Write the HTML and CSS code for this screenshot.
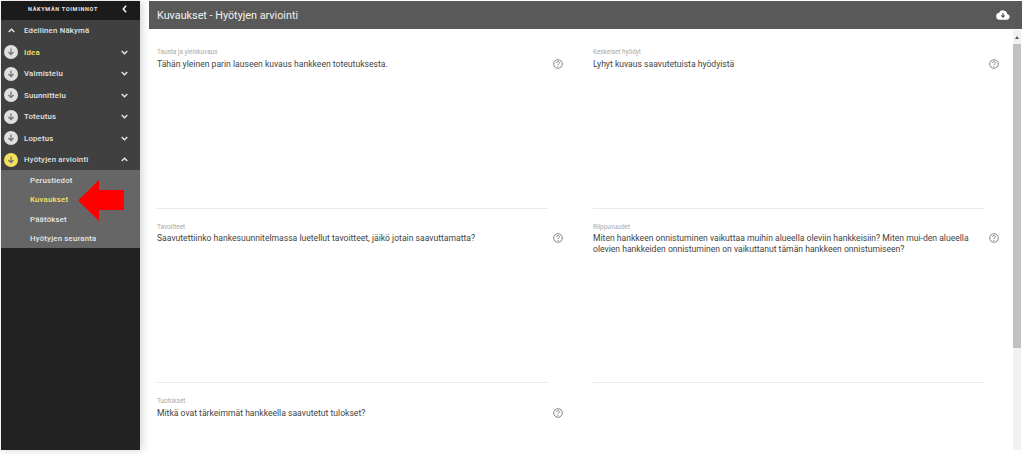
FILE: index.html
```html
<!DOCTYPE html>
<html lang="fi">
<head>
<meta charset="utf-8">
<title>Kuvaukset - Hyötyjen arviointi</title>
<link rel="stylesheet" href="styles.css">
</head>
<body>
<svg class="defs" width="0" height="0" aria-hidden="true">
  <symbol id="down" viewBox="0 0 14 14"><circle cx="7" cy="7" r="7" fill="currentColor"/><path d="M7 3.500v5.500M4.400 7 7 9.500 9.600 7" fill="none" stroke="#777" stroke-width="1.300"/></symbol>
  <symbol id="chev" viewBox="0 0 10 7"><path d="M1 1.200l4 4 4-4" fill="none" stroke="currentColor" stroke-width="2"/></symbol>
  <symbol id="help" viewBox="0 0 10 10"><circle cx="5" cy="5" r="4.300" fill="none" stroke="currentColor" stroke-width=".8"/><path d="M3.600 4c0-1.900 2.800-1.900 2.800-.2C6.400 4.900 5 4.800 5 6.200M5 6.900v1" fill="none" stroke="currentColor" stroke-width=".8"/></symbol>
</svg>
<div class="app">
  <aside class="sidebar">
    <div class="side-head">
      <span class="side-title">NÄKYMÄN TOIMINNOT</span>
      <svg class="back" viewBox="0 0 6 10"><path d="M5 1 1.500 5 5 9" fill="none" stroke="currentColor" stroke-width="2"/></svg>
    </div>
    <nav class="menu">
      <div class="row prev"><svg class="chev up lead" aria-hidden="true"><use href="#chev"/></svg><span class="row-text">Edellinen Näkymä</span></div>
      <div class="row"><svg class="dot"><use href="#down"/></svg><span class="row-text hi">Idea</span><svg class="chev"><use href="#chev"/></svg></div>
      <div class="row"><svg class="dot"><use href="#down"/></svg><span class="row-text">Valmistelu</span><svg class="chev"><use href="#chev"/></svg></div>
      <div class="row"><svg class="dot"><use href="#down"/></svg><span class="row-text">Suunnittelu</span><svg class="chev"><use href="#chev"/></svg></div>
      <div class="row"><svg class="dot"><use href="#down"/></svg><span class="row-text">Toteutus</span><svg class="chev"><use href="#chev"/></svg></div>
      <div class="row"><svg class="dot"><use href="#down"/></svg><span class="row-text">Lopetus</span><svg class="chev"><use href="#chev"/></svg></div>
      <div class="row"><svg class="dot hi"><use href="#down"/></svg><span class="row-text">Hyötyjen arviointi</span><svg class="chev up"><use href="#chev"/></svg></div>
    </nav>
    <div class="submenu">
      <div class="sub">Perustiedot</div>
      <div class="sub hi">Kuvaukset</div>
      <div class="sub">Päätökset</div>
      <div class="sub">Hyötyjen seuranta</div>
      <svg class="arrow" viewBox="0 0 46 41"><path d="M0 20.500 21 0v10h25v20H21v11z" fill="#fe0000"/></svg>
    </div>
  </aside>
  <main class="main">
    <header class="topbar">
      <h1 class="page-title">Kuvaukset - Hyötyjen arviointi</h1>
      <svg class="cloud" viewBox="0 0 24 16"><path d="M19.300 6.100A7.500 7.500 0 0 0 5.300 4.100 6 6 0 0 0 6 16h13a5 5 0 0 0 .3-9.900z" fill="#fff"/><path d="M12 4.500v6M9 8.500l3 3.200 3-3.200" fill="none" stroke="#555" stroke-width="2"/></svg>
    </header>
    <div class="body">
      <div class="fields">
        <section class="field">
          <div class="label">Tausta ja yleiskuvaus</div><p class="value">Tähän yleinen parin lauseen kuvaus hankkeen toteutuksesta.</p>
          <svg class="help"><use href="#help"/></svg>
        </section>
        <section class="field">
          <div class="label">Keskeiset hyödyt</div><p class="value">Lyhyt kuvaus saavutetuista hyödyistä</p>
          <svg class="help"><use href="#help"/></svg>
        </section>
        <section class="field">
          <div class="label">Tavoitteet</div><p class="value">Saavutettiinko hankesuunnitelmassa luetellut tavoitteet, jäikö jotain saavuttamatta?</p>
          <svg class="help"><use href="#help"/></svg>
        </section>
        <section class="field">
          <div class="label">Riippuvuudet</div><p class="value">Miten hankkeen onnistuminen vaikuttaa muihin alueella oleviin hankkeisiin? Miten mui-den alueella olevien hankkeiden onnistuminen on vaikuttanut tämän hankkeen onnistumiseen?</p>
          <svg class="help"><use href="#help"/></svg>
        </section>
        <section class="field">
          <div class="label">Tuotokset</div><p class="value">Mitkä ovat tärkeimmät hankkeella saavutetut tulokset?</p>
          <svg class="help"><use href="#help"/></svg>
        </section>
      </div>
      <div class="scrollbar">
        <div class="sb-btn"><span class="sb-arrow"></span></div>
        <div class="sb-thumb"></div>
      </div>
    </div>
  </main>
</div>
</body>
</html>
```
FILE: styles.css
```css
* { box-sizing: border-box; }
html, body { margin: 0; padding: 0; background: #fff; }
body { width: 1023px; height: 454px; overflow: hidden; font-family: Roboto, "Liberation Sans", sans-serif; }
.defs { display: block; height: 0; }
.app { display: flex; height: 450px; padding: 1px 1px 0; }
.sidebar { width: 139px; flex: none; background: #222; color: #e6e6e6; box-shadow: 2px 0 8px rgba(0,0,0,.18); display: flex; flex-direction: column; }
.side-head { height: 19px; background: #1b1b1b; display: flex; align-items: center; padding: 0 13px 4px 27px; flex: none; }
.side-title { flex: 1; font-size: 5.500px; font-weight: 700; letter-spacing: .7px; color: #e8e8e8; }
.back { width: 5px; height: 8px; color: #eee; }
.menu { background: #404040; height: 150px; flex: none; }
.row { height: 21.500px; display: flex; align-items: center; padding: 0 12px 0 3px; }
.row-text { flex: 1; margin-left: 6px; font-size: 7.800px; font-weight: 500; letter-spacing: .2px; color: #e3e3e3; }
.row-text.hi { color: #f5e46c; }
.dot { width: 14px; height: 14px; color: #e0e0e0; flex: none; }
.dot.hi { color: #f3e15e; }
.chev { width: 7px; height: 5px; color: #e8e8e8; flex: none; }
.chev.up { transform: rotate(180deg); }
.chev.lead { margin-left: 4px; }
.prev .row-text { margin-left: 9px; }
.submenu { position: relative; background: #666; height: 78px; padding-top: .5px; flex: none; }
.sub { height: 19.500px; display: flex; align-items: center; padding-left: 29px; font-size: 7.800px; font-weight: 500; letter-spacing: .2px; color: #e6e6e6; }
.sub.hi { color: #f5e46c; }
.arrow { position: absolute; left: 77px; top: 10px; width: 46px; height: 41px; }
.main { flex: 1; min-width: 0; margin-left: 9px; display: flex; flex-direction: column; }
.topbar { height: 28px; background: #595959; flex: none; display: flex; align-items: center; justify-content: space-between; padding: 0 12px 0 8px; }
.page-title { margin: 0; font-size: 10.800px; font-weight: 400; color: #f2f2f2; }
.cloud { width: 14px; height: 10px; }
.body { flex: 1; display: flex; min-height: 0; }
.fields { flex: 1; min-width: 0; overflow: hidden; display: grid; grid-template-columns: 391px 391px; column-gap: 45px; grid-auto-rows: 174.500px; padding: 19px 0 0 8px; align-content: start; }
.field { position: relative; border-bottom: 1px solid #e9e9e9; height: 160.500px; }
.field:last-child { border-bottom: 0; }
.label { font-size: 6.400px; color: #a8a8a8; line-height: 8px; }
.value { margin: 2.500px 0 0; font-size: 8.600px; line-height: 10.500px; color: #444; }
.help { position: absolute; left: 396px; top: 10.500px; width: 10px; height: 10px; color: #666; }
.scrollbar { width: 8px; margin: 1px 1px 0 0; flex: none; background: #f1f1f1; display: flex; flex-direction: column; }
.sb-btn { height: 14px; display: flex; align-items: center; justify-content: center; flex: none; }
.sb-arrow { width: 0; height: 0; border-left: 2.500px solid transparent; border-right: 2.500px solid transparent; border-bottom: 3px solid #555; }
.sb-thumb { height: 304px; background: #c1c1c1; flex: none; }
```
